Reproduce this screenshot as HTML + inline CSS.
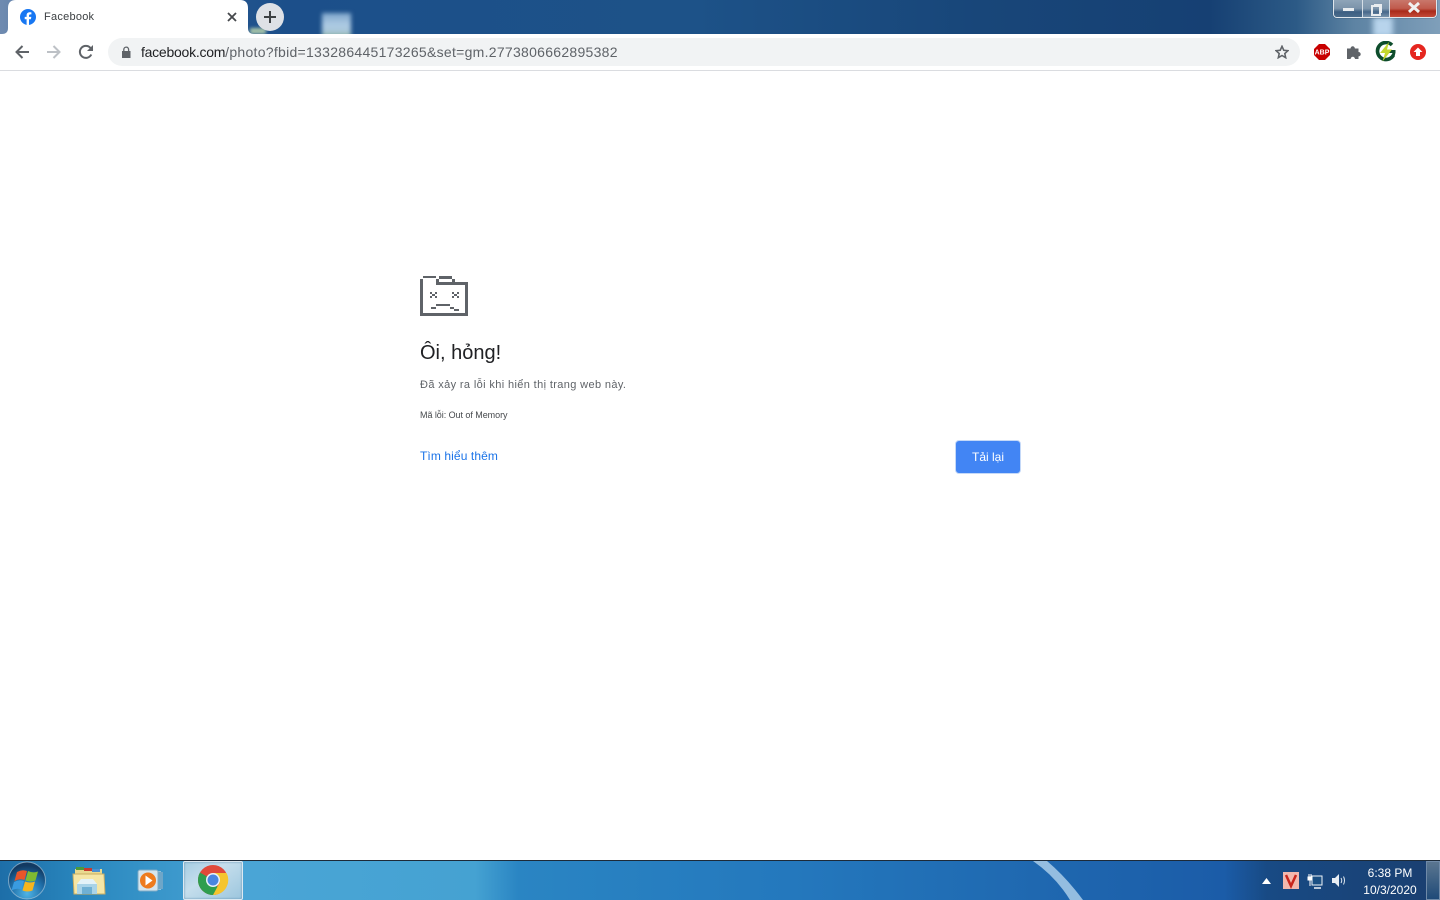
<!DOCTYPE html>
<html lang="vi"><head><meta charset="utf-8"><title>Facebook</title>
<style>
html,body{margin:0;padding:0;width:1440px;height:900px;overflow:hidden;background:#fff;font-family:"Liberation Sans","Noto Sans CJK SC",sans-serif}
.a{position:absolute;white-space:nowrap}
#top{left:0;top:0;width:1440px;height:34px;background:linear-gradient(90deg,#6f8bb0 0,#2d5c95 8%,#1c4f8a 20%,#1d5288 48%,#184679 68%,#164073 84%,#2c5a86 90%,#5d83a3 94%,#7f9fba 100%)}
#tb{left:0;top:860px;width:1440px;height:40px;background:linear-gradient(90deg,#1d6ea8 0,#2a88bf 6%,#4aa5d6 17%,#45a2d2 33%,#2a85c3 36%,#2478bd 55%,#1f68b0 72%,#1b5ca8 85%,#184a84 88%,#1a3f70 100%);border-top:1px solid #1d2a38;box-sizing:border-box}
</style></head><body>
<div class="a" id="top"></div>
<div class="a" style="left:250px;top:28px;width:16px;height:6px;background:#a4c2a8;filter:blur(1.5px)"></div>
<div class="a" style="left:322px;top:13px;width:29px;height:24px;background:linear-gradient(#7fa6cc,#aecbe4 50%,#a8c6d8 80%,#8fb58f);filter:blur(2px)"></div>
<div class="a" style="left:1373px;top:17px;width:20px;height:20px;background:#b8d4ec;filter:blur(3px)"></div>
<div class="a" style="left:0;top:34px;width:1440px;height:36px;background:#fff"></div>
<div class="a" style="left:0;top:70px;width:1440px;height:1px;background:#dadce0"></div>
<svg class="a" style="left:0;top:0" width="260" height="34"><path d="M0 34h2q6 0 6-6V8q0-8 8-8h224q8 0 8 8v20q0 6 6 6z" fill="#fff"/></svg>
<svg class="a" style="left:20px;top:9px" width="16" height="16" viewBox="0 0 16 16"><circle cx="8" cy="8" r="8" fill="#1877f2"/><path d="M9 16V10.200h1.900l.4-2.300H9V6.600c0-.7.3-1.200 1.300-1.200h1.100V3.400c-.5-.1-1.100-.2-1.700-.2-1.900 0-3.100 1.100-3.100 3.100v1.600H4.700v2.300h1.900V16z" fill="#fff"/></svg>
<div class="a" style="left:44px;top:10px;font-size:11px;line-height:14px;color:#3c4043;letter-spacing:.25px">Facebook</div>
<svg class="a" style="left:226px;top:11px" width="12" height="12"><path d="M2 2l8 8M10 2l-8 8" stroke="#45484c" stroke-width="1.800"/></svg>
<div class="a" style="left:256px;top:3px;width:28px;height:28px;border-radius:50%;background:#dee1e6"></div>
<svg class="a" style="left:263px;top:10px" width="14" height="14"><path d="M7 1v12M1 7h12" stroke="#3c4043" stroke-width="2"/></svg>
<svg class="a" style="left:14px;top:44px" width="16" height="16"><path d="M15 8H2.500M8.500 2L2.500 8l6 6" fill="none" stroke="#5f6368" stroke-width="2"/></svg>
<svg class="a" style="left:46px;top:44px" width="16" height="16"><path d="M1 8h12.500M7.500 2l6 6-6 6" fill="none" stroke="#bdc1c6" stroke-width="2"/></svg>
<svg class="a" style="left:78px;top:44px" width="16" height="16"><path d="M13.300 10.500A6 6 0 1 1 12.300 3.800L14.500 6" fill="none" stroke="#5f6368" stroke-width="2"/><path d="M15 1v6H9z" fill="#5f6368"/></svg>
<div class="a" style="left:108px;top:38px;width:1192px;height:28px;border-radius:14px;background:#f1f3f4"></div>
<svg class="a" style="left:121px;top:46px" width="10" height="12"><path d="M1 5h8.500v7H1z" fill="#5f6368"/><path d="M2.800 5.500V3.500a2.400 2.400 0 0 1 4.800 0v2" fill="none" stroke="#5f6368" stroke-width="1.300"/></svg>
<div class="a" style="left:141px;top:44px;font-size:14px;line-height:16px;color:#5f6368;letter-spacing:.28px"><span style="color:#202124;letter-spacing:-.25px">facebook.com</span>/photo?fbid=133286445173265&amp;set=gm.2773806662895382</div>
<svg class="a" style="left:1275px;top:45px" width="14" height="14" viewBox="0 0 16 16"><path d="M8 1.500l2 4.500 4.800.5-3.600 3.200 1 4.800L8 12l-4.200 2.500 1-4.800L1.200 6.500 6 6z" fill="none" stroke="#5f6368" stroke-width="1.800"/></svg>
<svg class="a" style="left:1314px;top:44px" width="16" height="16"><path d="M5 0h6l5 5v6l-5 5H5l-5-5V5z" fill="#c80000"/><text x="8" y="10.500" font-size="7" font-weight="700" fill="#fff" text-anchor="middle" font-family="Liberation Sans">ABP</text></svg>
<svg class="a" style="left:1346px;top:44px" width="16" height="16" viewBox="0 0 16 16"><path d="M1 4.500h3.500a2.200 2.200 0 1 1 4.400 0H12.500V8a2.200 2.200 0 1 1 0 4.400V15H9a2.200 2.200 0 1 0-4.400 0H1z" fill="#5f6368"/></svg>
<svg class="a" style="left:1375px;top:41px" width="21" height="21" viewBox="0 0 21 21"><path d="M17 4A8.500 8.500 0 1 0 18.500 14" fill="none" stroke="#0e4d2c" stroke-width="3.600"/><path d="M12 10.500h7v1A8 8 0 0 1 14 18" fill="none" stroke="#0e4d2c" stroke-width="3"/><path d="M14 1L5 12h5l-2.500 8.500L17 8.500h-5z" fill="#c4d82e"/></svg>
<svg class="a" style="left:1410px;top:44px" width="16" height="16"><circle cx="8" cy="8" r="8" fill="#e5261f"/><path d="M8 3.500L12.500 8H10v4H6V8H3.500z" fill="#fff"/></svg>
<div class="a" style="left:1333px;top:0;width:104px;height:18px;box-sizing:border-box;border:1px solid #dfe6ec;border-top:0;border-radius:0 0 4px 4px;box-shadow:0 0 1px #24364c;overflow:hidden;display:flex">
<div style="width:29px;height:17px;background:linear-gradient(#8ea4b8,#7b93aa 50%,#3d5f82 70%,#4a6b8b);border-right:1px solid #d5dee6;box-sizing:border-box;position:relative"><div style="position:absolute;left:9px;top:8px;width:11px;height:3px;background:#e8ecef"></div></div>
<div style="width:27px;height:17px;background:linear-gradient(#8ea4b8,#7f97ad 50%,#46678a 70%,#7892ab);border-right:1px solid #d5dee6;box-sizing:border-box;position:relative"><div style="position:absolute;left:8px;top:5px;width:6px;height:7px;border:2px solid #e8ecef;box-shadow:2px -2px 0 -1px #e8ecef"></div></div>
<div style="flex:1;height:17px;background:linear-gradient(#c9776b,#c05a4c 50%,#a92a1a 65%,#c44a38);position:relative"><svg style="position:absolute;left:17px;top:2px" width="14" height="11"><path d="M2 1l10 9M12 1L2 10" stroke="#f0f0f0" stroke-width="3"/></svg></div>
</div>
<svg class="a" style="left:420px;top:276px" width="48" height="40" viewBox="0 0 48 40" shape-rendering="crispEdges" fill="#5f6368"><path d="M3 0h13v2H3zM19 0h13v3H19zM0 3h3v37H0zM16 3h3v6h-3zM32 3h3v3h-3zM19 6h29v3H19zM45 9h3v31h-3zM3 37h42v3H3z"/><path d="M10 16h2v2h-2zM15 16h2v2h-2zM12 18h3v2h-3zM10 20h2v2h-2zM15 20h2v2h-2zM32 16h2v2h-2zM37 16h2v2h-2zM34 18h3v2h-3zM32 20h2v2h-2zM37 20h2v2h-2zM11 31h5v2h-5zM16 28h14v2H16zM30 31h4v2h-4zM34 33h5v2h-5z"/></svg>
<div class="a" style="left:420px;top:340px;font-size:20px;line-height:26px;color:#202124">Ôi, hỏng!</div>
<div class="a" style="left:420px;top:377px;font-size:11px;line-height:16px;color:#5f6368;letter-spacing:.37px">Đã xảy ra lỗi khi hiển thị trang web này.</div>
<div class="a" style="left:420px;top:409px;font-size:9px;line-height:13px;color:#46494d;letter-spacing:-.05px">Mã lỗi: Out of Memory</div>
<div class="a" style="left:420px;top:448px;font-size:12px;line-height:16px;color:#1a73e8;letter-spacing:.1px">Tìm hiểu thêm</div>
<div class="a" style="left:955px;top:440px;width:66px;height:34px;box-sizing:border-box;background:#4285f4;border:1px solid #c5d9f8;border-radius:4px;color:#fff;font-size:12px;line-height:32px;text-align:center">Tải lại</div>
<div class="a" id="tb"></div>
<svg class="a" style="left:1030px;top:861px" width="54" height="39"><path d="M3 0h14Q36 16 53 39H40Q26 16 3 0z" fill="#a9cde9" opacity=".85"/></svg>
<svg class="a" style="left:7px;top:861px" width="40" height="39" viewBox="0 0 40 39"><defs><radialGradient id="g" cx=".5" cy=".85" r=".75"><stop offset="0" stop-color="#4fb4e6"/><stop offset=".6" stop-color="#1f6ea8"/><stop offset="1" stop-color="#123a62"/></radialGradient></defs><circle cx="20" cy="19.500" r="18.500" fill="url(#g)" stroke="#b8cfdf" stroke-opacity=".6"/><path d="M10 11q5-3 10-1l-2.500 9q-5-2-10 1z" fill="#e8552a"/><path d="M21 10q5 2.500 10 .5l-2.500 9q-5 2-10 0z" fill="#7fbb32"/><path d="M7 21q5-3 10-1l-2.500 8.500q-5-2-10 1z" fill="#3a9be0"/><path d="M18 20.500q5 2 10 0l-2.500 9q-5 2-10 0z" fill="#f6b51e"/></svg>
<svg class="a" style="left:72px;top:865px" width="34" height="30" viewBox="0 0 34 30"><path d="M3 4h27v8H3z" fill="#e9d98f"/><path d="M4 2h8v3H4z" fill="#4c9a3c"/><path d="M12 3h8v3h-8z" fill="#c63b2e"/><path d="M20 4h8v3h-8z" fill="#4b8fd0"/><path d="M1 9h31l1 20H2z" fill="#f5e6a6" stroke="#c9ad62"/><path d="M5 19h20v10H5z" fill="#a9d3e8"/><path d="M9 14h12l4 5H5z" fill="#e4f2f8"/><path d="M10 22h10v7H10z" fill="#6fb0d4"/></svg>
<svg class="a" style="left:137px;top:869px" width="27" height="23" viewBox="0 0 27 23"><path d="M18 2h6v19h-6z" fill="#8fc0dc"/><path d="M20 3h6v17h-6z" fill="#6ea6c8"/><rect x="1" y="1" width="20" height="21" rx="2" fill="#d5e5ee" stroke="#7eaac5"/><circle cx="11" cy="11.500" r="8" fill="#ee7b1e"/><path d="M8.500 6.500l7 5-7 5z" fill="#fff"/></svg>
<div class="a" style="left:183px;top:861px;width:60px;height:39px;box-sizing:border-box;border:1px solid #dce9f2;border-radius:2px;background:linear-gradient(145deg,#a5cde2 0,#c5deec 40%,#9cc6de 100%);box-shadow:inset 0 0 2px #5f8fb0"></div>
<svg class="a" style="left:197px;top:864px" width="32" height="32" viewBox="0 0 32 32"><circle cx="16" cy="16" r="15" fill="#e04a3a"/><path d="M16 16L3 8.500A15 15 0 0 0 16 31L23.500 28z" fill="#2f9e4f"/><path d="M16 9h13.500A15 15 0 0 1 16 31l7-13z" fill="#f5c52e"/><circle cx="16" cy="16" r="7" fill="#eaf2fa"/><circle cx="16" cy="16" r="5.500" fill="#4a86e0"/></svg>
<svg class="a" style="left:1262px;top:878px" width="9" height="6"><path d="M4.500 0L9 6H0z" fill="#fff"/></svg>
<svg class="a" style="left:1283px;top:872px" width="16" height="17" viewBox="0 0 16 17"><path d="M0 0h16v17H0z" fill="#f2b7ad"/><path d="M3 3l5 11 5-11" fill="none" stroke="#c8251c" stroke-width="2.500"/></svg>
<svg class="a" style="left:1307px;top:873px" width="16" height="16" viewBox="0 0 16 16"><path d="M5 3h10v9H5z" fill="#1b4f83" stroke="#f0f4f8"/><path d="M7 15h7" stroke="#f0f4f8" stroke-width="1.500"/><path d="M2 1v3M4 1v3M1 4h4v3H1zM3 7v6" stroke="#fff" fill="#fff"/></svg>
<svg class="a" style="left:1331px;top:873px" width="16" height="15" viewBox="0 0 16 15"><path d="M1 5h3l4-4v13l-4-4H1z" fill="#e8eef4"/><path d="M10 5q1.500 2.500 0 5M12.500 3.500q2 4 0 8" fill="none" stroke="#dde6ee"/></svg>
<div class="a" style="left:1350px;top:865px;width:80px;text-align:center;font-size:12px;line-height:16px;color:#fff">6:38 PM</div>
<div class="a" style="left:1350px;top:882px;width:80px;text-align:center;font-size:12px;line-height:16px;color:#fff">10/3/2020</div>
<div class="a" style="left:1426px;top:861px;width:14px;height:39px;box-sizing:border-box;border:1px solid #6f8aa8;background:linear-gradient(#5b7690,#1f4a78)"></div>
</body></html>
